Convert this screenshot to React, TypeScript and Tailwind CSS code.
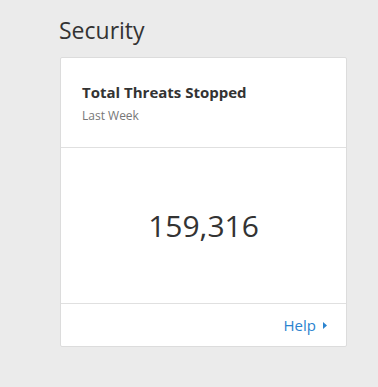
import React from 'react';

export default function App() {
  return (
    <div
      className="min-h-[387px] w-[378px] bg-[#ebebeb] pl-[60px] pt-[14px]"
      style={{ fontFamily: '"Open Sans", "Liberation Sans", sans-serif' }}
    >
      <h1 className="-ml-[1px] text-[23px] leading-[32px] text-[#333]">Security</h1>

      <div className="mt-[11px] w-[287px] rounded-[2px] border border-[#dcdcdc] bg-white">
        {/* Header */}
        <div className="h-[90px] border-b border-[#e0e0e0] px-[21px] pt-[24px]">
          <h2 className="text-[15px] font-bold leading-[20px] text-[#333]">Total Threats Stopped</h2>
          <p className="mt-[6px] text-[12px] leading-[16px] text-[#777]">Last Week</p>
        </div>

        {/* Value */}
        <div className="flex h-[156px] items-center justify-center border-b border-[#e0e0e0]">
          <span className="text-[30px] leading-[40px] text-[#333]">159,316</span>
        </div>

        {/* Footer */}
        <div className="flex h-[42px] items-center justify-end pr-[19px]">
          <a href="#" className="flex items-center gap-[7px] pt-[1px] text-[15px] text-[#2b83cf]">
            Help
            <svg width="4" height="7" viewBox="0 0 4 7">
              <path d="M0 0 L4 3.5 L0 7 Z" fill="#2b83cf" />
            </svg>
          </a>
        </div>
      </div>
    </div>
  );
}
